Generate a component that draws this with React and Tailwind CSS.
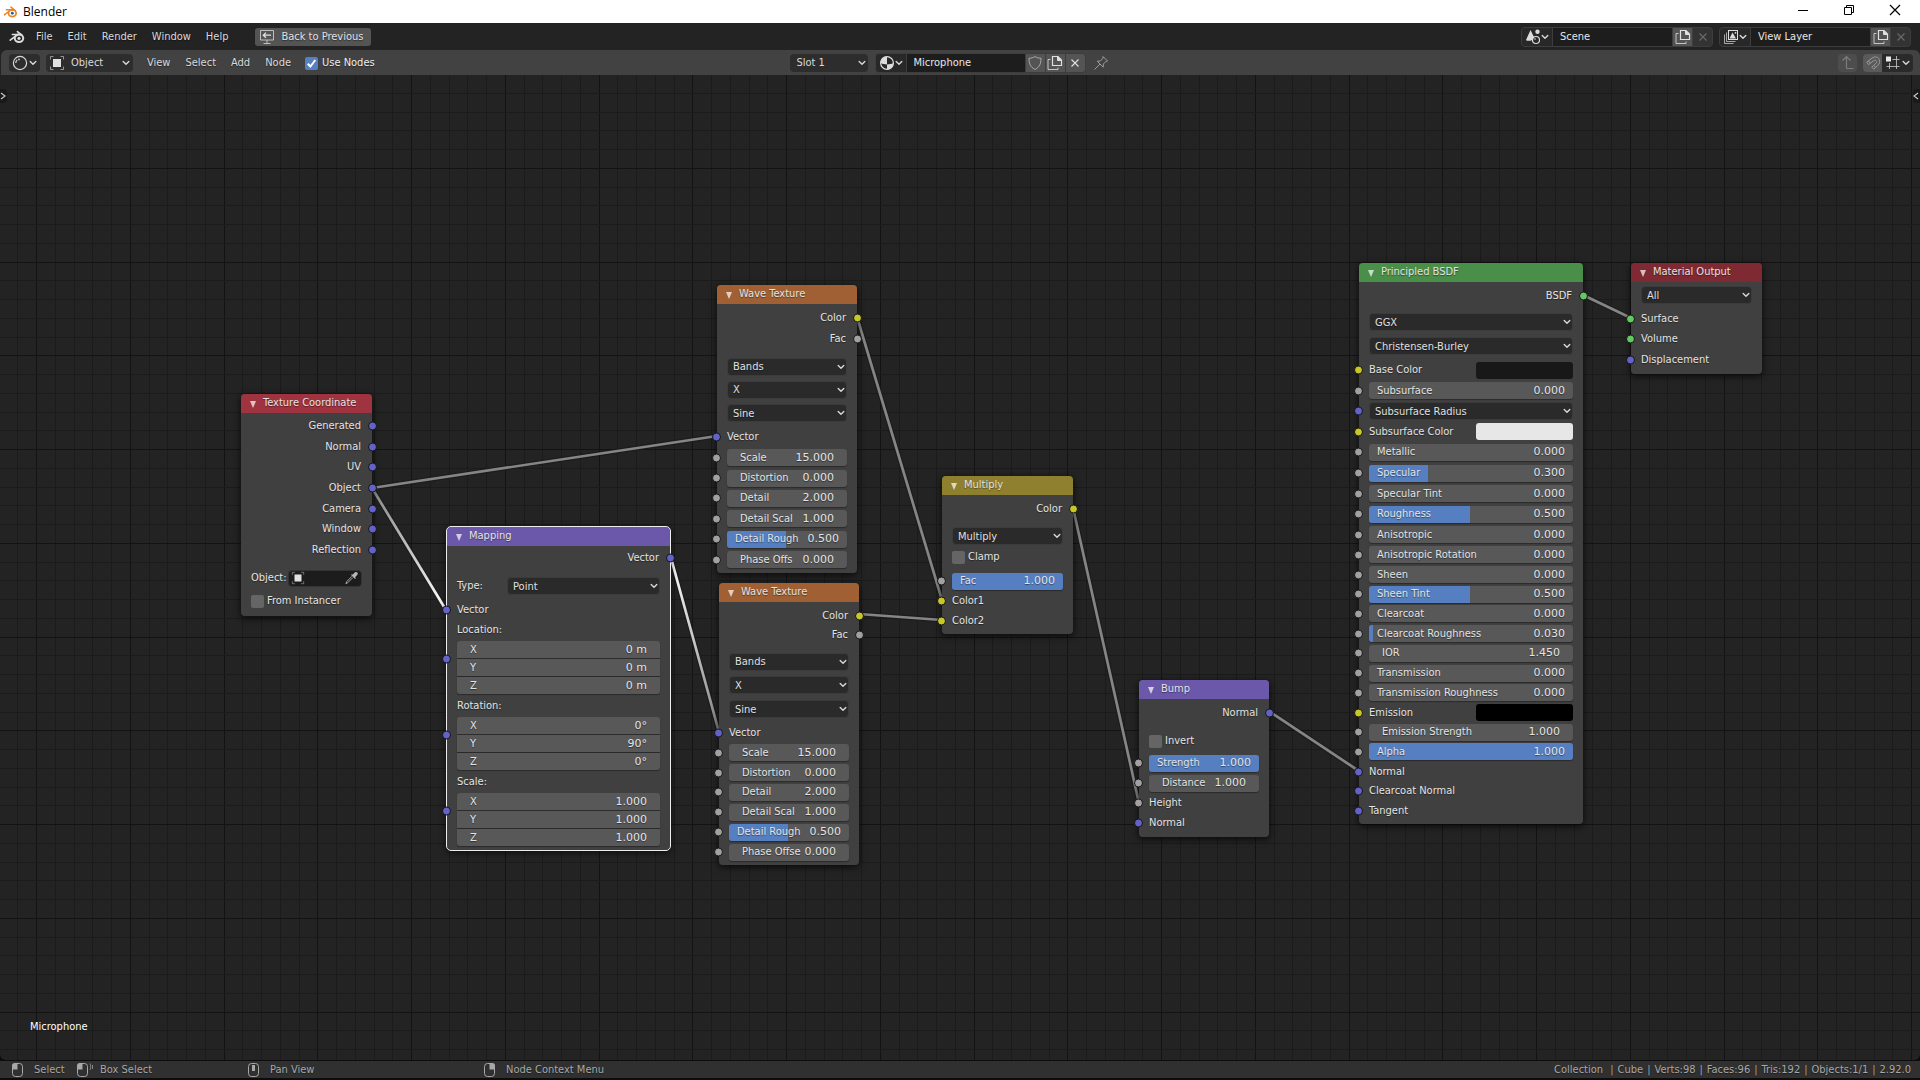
import React, { useId } from "react";

const SANS = "font-['DejaVu_Sans_Condensed','DejaVu_Sans',sans-serif]";
const SHADOW = "[text-shadow:0_1px_1px_rgba(0,0,0,0.45)]";

/* ---------- icons ---------- */

function BlenderLogo({ className, eye = "currentColor" }) {
  return (
    <svg viewBox="0 0 24 20" className={className} fill="none" aria-hidden="true">
      <g stroke="currentColor" strokeLinecap="round" strokeLinejoin="round" strokeWidth="2.4">
        <path d="M12.6 1.8 20 7.6" />
        <path d="M5 6.2h12" />
        <path d="M1.8 14.8 12 7" />
      </g>
      <ellipse cx="15" cy="12" rx="6.4" ry="5.6" stroke="currentColor" strokeWidth="3" />
      <circle cx="15" cy="12" r="2.4" fill={eye} />
    </svg>
  );
}

function Chevron({ className = "" }) {
  return (
    <svg viewBox="0 0 8 6" className={"pointer-events-none h-[6px] w-2 " + className} fill="none" stroke="#d8d8d8" strokeWidth="1.4" strokeLinecap="round" strokeLinejoin="round" aria-hidden="true">
      <path d="M1.2 1.4 4 4.2 6.8 1.4" />
    </svg>
  );
}

function Icon({ children, className = "size-4", label }) {
  return (
    <svg viewBox="0 0 16 16" className={"shrink-0 " + className} fill="none" stroke="currentColor" aria-label={label} aria-hidden={label ? undefined : true}>
      {children}
    </svg>
  );
}

const BackIcon = () => (
  <Icon>
    <path d="M1.5 1.5h13v9.5h-13zM8 11v3.5M4.5 14.5h7" strokeWidth="1" opacity="0.75" />
    <path d="M12 6.2H4.5M7 3.6 4.3 6.2 7 8.8" strokeWidth="1.3" />
  </Icon>
);
const ShaderIcon = () => (
  <Icon>
    <circle cx="8" cy="8" r="6.6" strokeWidth="1.2" />
    <path d="M3.8 8a4.2 4.2 0 0 1 1.4-3.1" strokeWidth="1.2" />
    <circle cx="7" cy="4.4" r="0.9" fill="currentColor" stroke="none" />
  </Icon>
);
const ObjectIcon = ({ className }) => (
  <Icon className={className}>
    <rect x="4" y="4" width="8" height="8" fill="#e0e0e0" stroke="none" />
    <path d="M1.5 4.5v-3h3M11.5 1.5h3v3M14.5 11.5v3h-3M4.5 14.5h-3v-3" opacity="0.6" />
  </Icon>
);
const MaterialIcon = () => (
  <Icon>
    <circle cx="8" cy="8" r="6.4" strokeWidth="1.2" />
    <path d="M8 1.6A6.4 6.4 0 0 0 1.6 8c2 1 4 1.4 6.4 1.4z" fill="currentColor" stroke="none" />
    <path d="M8 9.4c2.600 0 4.600-.4 6.400-1.400A6.400 6.400 0 0 1 8 14.400z" fill="currentColor" stroke="none" />
  </Icon>
);
const ShieldIcon = () => (
  <Icon>
    <path d="M8 1.500C6.300 2.700 4.300 3.200 2 3.300c0 5.200 1.200 8.600 6 11.200 4.800-2.600 6-6 6-11.200-2.300-.1-4.300-.6-6-1.800z" opacity="0.600" />
  </Icon>
);
const DuplicateIcon = () => (
  <Icon>
    <path d="M5.500 1.500h5.500l3.500 3.500v5.500h-9z" strokeWidth="1.200" />
    <path d="M10.500 1.500v4h4z" fill="currentColor" />
    <path d="M3.500 4.500h-2.500v10h10v-2" opacity="0.800" />
  </Icon>
);
const CrossIcon = () => (
  <Icon className="size-4">
    <path d="m4.500 4.500 7 7M11.500 4.500l-7 7" strokeWidth="1.100" />
  </Icon>
);
const PinIcon = () => (
  <Icon className="size-4">
    <path d="m10 1.500 4.500 4.500-1.500.3-2.600 2.700-.2 3.200-6-6 3.200-.2L10 3.200zM7 9 1.500 14.500" strokeLinejoin="round" />
  </Icon>
);
const SceneIcon = () => (
  <Icon>
    <path d="M5.500 1 9 8c0 1.500-1.500 2-2.500 3.500C4 12 1.500 12 1 11z" fill="currentColor" stroke="none" />
    <circle cx="12.500" cy="2.800" r="2.200" fill="currentColor" stroke="none" />
    <circle cx="11" cy="11" r="3.500" strokeWidth="1.200" />
    <circle cx="10" cy="10" r="0.800" fill="currentColor" stroke="none" />
  </Icon>
);
const LayerIcon = () => (
  <Icon>
    <rect x="5.500" y="1.500" width="9" height="9" />
    <path d="m6.500 9.500 3-6 3.500 6z" fill="currentColor" stroke="none" />
    <circle cx="12.500" cy="3.800" r="0.900" fill="currentColor" stroke="none" />
    <path d="M3.500 3.500v9h9M1.500 5.500v9h9" opacity="0.700" />
  </Icon>
);
const ParentIcon = () => (
  <Icon>
    <path d="M6.500 13.500v-12M2.500 5.500l4-4 4 4M6.500 13.500h7" strokeWidth="1.200" />
  </Icon>
);
const MagnetIcon = () => (
  <Icon>
    <path d="M1.700 7.200 7 3.200c3-2.300 6.200-1.200 7.200 1.200s.2 4.400-1.200 5.800l-4.200 4-2-2L11 8.200c1-1 .8-2-.1-2.600s-1.800-.3-2.600.3L3.600 9.600z" strokeLinejoin="round" />
    <path d="m3.500 6 1.800 2.300M8.600 10.400l2 2" />
  </Icon>
);
const SnapIcon = () => (
  <Icon>
    <rect x="1" y="1.500" width="5" height="5" fill="#ececec" stroke="none" />
    <path d="M7.500 4.500h7M11.500 1v13M4.500 8v6M1.500 11.500h13" opacity="0.800" />
  </Icon>
);
const PipetteIcon = () => (
  <Icon className="size-[14px]">
    <path d="M9 7.500 3 13.500l-2 1 1-2.500 6-6" />
    <path d="m7 4.500 4.500 4.500 1-1-1-1 2.700-2.700a2 2 0 0 0-2.800-2.800L8.700 4.200l-.8-.8z" fill="currentColor" stroke="none" />
  </Icon>
);

function MouseIcon({ button, drag }) {
  return (
    <svg viewBox="0 0 18 16" className="h-4 w-[18px] shrink-0" fill="none" stroke="#a8a8a8" aria-hidden="true">
      <rect x="1.500" y="1.500" width="10" height="13" rx="3" />
      {button === "left" && <path d="M1 7.500V4a3 3 0 0 1 3-3h2.500v6.500z" fill="#a8a8a8" stroke="none" />}
      {button === "right" && <path d="M12 7.500V4a3 3 0 0 0-3-3H6.500v6.500z" fill="#a8a8a8" stroke="none" />}
      {button === "middle" && <rect x="5" y="3" width="3" height="6" fill="#a8a8a8" stroke="none" />}
      {drag && <path d="M14 1.500c1 2 1 4.500 0 6.500M16.500 3v4" opacity="0.700" />}
    </svg>
  );
}

/* ---------- header controls ---------- */

function MenuItem({ children }) {
  return <button type="button" className={"px-[7px] text-[#dadada] " + SHADOW}>{children}</button>;
}

function IdField({ icon, name, width, children }) {
  return (
    <div className="flex h-5 items-stretch gap-px overflow-hidden rounded-[4px] border border-[#3d3d3d] bg-[#3d3d3d]">
      <button type="button" aria-label={"Browse " + name} className="flex w-[30px] items-center justify-between bg-[#282828] pr-[3px] pl-[3px] text-[#dcdcdc]">
        {icon}
        <Chevron />
      </button>
      <input aria-label={name + " name"} defaultValue={name} className={"min-w-0 bg-[#1d1d1d] px-[7px] text-[#e6e6e6] outline-none " + width} />
      {children}
    </div>
  );
}

function IconButton({ label, muted, children }) {
  return (
    <button type="button" aria-label={label} className={muted ? "flex w-[19px] items-center justify-center bg-[#333333] text-[#6a6a6a]" : "flex w-[19px] items-center justify-center bg-[#545454] text-[#e0e0e0]"}>
      {children}
    </button>
  );
}

/* ---------- node parts ---------- */

const SOCKET = { vector: "bg-[#6363c7]", color: "bg-[#c7c729]", value: "bg-[#a1a1a1]", shader: "bg-[#63c763]" };

function Socket({ type, side }) {
  const place = side === "out" ? "-right-[15px]" : "-left-[15px]";
  return <span className={"absolute top-1/2 size-[9px] -translate-y-1/2 rounded-full border border-[#151515] " + place + " " + SOCKET[type]} />;
}

function Row({ socket, side = "in", children, className = "" }) {
  return (
    <div className={"relative flex items-center " + className}>
      {socket && <Socket type={socket} side={side} />}
      {children}
    </div>
  );
}

function Out({ type, children }) {
  return (
    <Row socket={type} side="out" className="justify-end">
      <span className="pr-px">{children}</span>
    </Row>
  );
}

function Dropdown({ value, label, className = "w-full" }) {
  return (
    <span className={"relative flex h-[18px] items-center " + className}>
      <select aria-label={label} className={"h-full w-full appearance-none rounded-[4px] border border-[#3b3b3b] bg-[#2a2a2a] pl-[5px] leading-none text-[#e0e0e0] outline-none " + SHADOW}>
        <option>{value}</option>
      </select>
      <Chevron className="absolute right-[2px]" />
    </span>
  );
}

function Field({ label, value, fill = 0, slider, shape = "rounded-[3px]" }) {
  const id = useId();
  return (
    <div className={"relative flex h-[17px] w-full items-center overflow-hidden bg-[#585858] shadow-[0_1px_1px_rgba(0,0,0,0.35)] " + shape + (slider ? " px-2" : " px-[13px]")}>
      {fill > 0 && <span className="absolute inset-y-0 left-0 bg-[#557fc1]" style={{ width: fill * 100 + "%" }} />}
      <label htmlFor={id} className="relative shrink-0 whitespace-nowrap">{label}</label>
      <input id={id} defaultValue={value} className={"relative w-0 min-w-0 flex-1 bg-transparent text-right font-['DejaVu_Sans',sans-serif] text-[#e4e4e4] outline-none " + SHADOW} />
    </div>
  );
}

function Swatch({ label, value }) {
  const id = useId();
  return (
    <>
      <label htmlFor={id}>{label}</label>
      <input id={id} type="color" defaultValue={value} className="ml-auto h-[17px] w-[97px] appearance-none overflow-hidden rounded-[3px] border-0 bg-transparent p-0 [&::-webkit-color-swatch]:border-0 [&::-webkit-color-swatch-wrapper]:p-0" />
    </>
  );
}

function Check({ label }) {
  return (
    <label className="flex items-center gap-[3px]">
      <input type="checkbox" className="size-[13px] appearance-none rounded-[2px] bg-[#656565] checked:bg-[#5680c2]" />
      {label}
    </label>
  );
}

function Node({ title, tone, place, selected, children }) {
  return (
    <section
      className={
        "absolute flex flex-col rounded-[4px] bg-[#424242]/95 text-[#e4e4e4] shadow-[0_2px_6px_1px_rgba(0,0,0,0.6)] " +
        SHADOW + " " + place + (selected ? " outline outline-[#ededed]" : "")
      }
    >
      <header className={"flex h-[19px] shrink-0 items-center rounded-t-[4px] pb-px " + tone}>
        <button type="button" aria-label={"Collapse " + title} className="flex w-[22px] justify-center pt-[2px] pl-[2px]">
          <svg viewBox="0 0 6 7" className="h-[7px] w-[6px]" aria-hidden="true"><path d="M0 0h6L3 7z" fill="#ffffff" opacity="0.700" /></svg>
        </button>
        <h2>{title}</h2>
      </header>
      <div className="flex flex-col px-[10px]">{children}</div>
    </section>
  );
}

function VectorFields({ label, axes }) {
  return (
    <>
      <div className="flex h-5 items-center">{label}</div>
      <div className="flex h-14 flex-col gap-px pt-px">
        <Row socket="vector" className="flex-col gap-px">
          <Field label="X" value={axes[0]} shape="rounded-t-[3px]" />
          <Field label="Y" value={axes[1]} shape="rounded-none" />
        </Row>
        <Field label="Z" value={axes[2]} shape="rounded-b-[3px]" />
      </div>
    </>
  );
}

function WaveTexture({ place, outputs, options, inputs, last }) {
  return (
    <Node title="Wave Texture" tone="bg-[#a06034]" place={place}>
      <div className={"grid auto-rows-fr pt-1 " + outputs}>
        <Out type="color">Color</Out>
        <Out type="value">Fac</Out>
      </div>
      <div className={"grid auto-rows-fr items-center " + options}>
        <Dropdown label="Type" value="Bands" />
        <Dropdown label="Direction" value="X" />
        <Dropdown label="Profile" value="Sine" />
      </div>
      <div className={"grid auto-rows-fr " + inputs}>
        <Row socket="vector">Vector</Row>
        <Row socket="value"><Field label="Scale" value="15.000" /></Row>
        <Row socket="value"><Field label="Distortion" value="0.000" /></Row>
        <Row socket="value"><Field label="Detail" value="2.000" /></Row>
        <Row socket="value"><Field label="Detail Scal" value="1.000" /></Row>
        <Row socket="value"><Field label="Detail Rough" value="0.500" fill={0.49} slider /></Row>
        <Row socket="value"><Field label={last} value="0.000" /></Row>
      </div>
    </Node>
  );
}

const BSDF_FIRST = [
  ["Metallic", "0.000", 0],
  ["Specular", "0.300", 0.29],
  ["Specular Tint", "0.000", 0],
  ["Roughness", "0.500", 0.495],
  ["Anisotropic", "0.000", 0],
];
const BSDF_SECOND = [
  ["Anisotropic Rotation", "0.000", 0],
  ["Sheen", "0.000", 0],
  ["Sheen Tint", "0.500", 0.495],
  ["Clearcoat", "0.000", 0],
  ["Clearcoat Roughness", "0.030", 0.02],
];

const STATS = ["Collection\u00a0", "Cube", "Verts:98", "Faces:96", "Tris:192", "Objects:1/1", "2.92.0"];

/* ---------- canvas drawing ---------- */

const STEP = 75 / 4;
const GRID_COLUMNS = Array.from({ length: 210 }, (_, i) => ({ at: Math.floor(17.8 + i * STEP), major: i % 5 === 1 }));
const GRID_ROWS = Array.from({ length: 120 }, (_, i) => ({ at: Math.floor(18.3 + i * STEP), major: i % 5 === 4 }));

const LINKS = [
  { from: [372, 413], to: [717, 361], colors: ["#858585", "#858585"] },
  { from: [372, 413], to: [446, 535], colors: ["#858585", "#ffffff"] },
  { from: [671, 483], to: [719, 657], colors: ["#ffffff", "#858585"] },
  { from: [857, 242], to: [942, 525], colors: ["#858585", "#858585"] },
  { from: [859, 539], to: [942, 545], colors: ["#858585", "#858585"] },
  { from: [1073, 433], to: [1139, 728], colors: ["#858585", "#858585"] },
  { from: [1270, 637], to: [1359, 696], colors: ["#858585", "#858585"] },
  { from: [1583, 220], to: [1631, 243], colors: ["#858585", "#858585"] },
];

function Backdrop() {
  return (
    <svg className="absolute inset-0 size-full" aria-hidden="true">
      <g shapeRendering="crispEdges">
        {GRID_COLUMNS.map((c) => <rect key={c.at} x={c.at} y="0" width="1" height="100%" fill={c.major ? "#131313" : "#1b1b1b"} />)}
        {GRID_ROWS.map((r) => <rect key={r.at} x="0" y={r.at} width="100%" height="1" fill={r.major ? "#131313" : "#1b1b1b"} />)}
      </g>
      {LINKS.map((l, i) => (
        <g key={i}>
          <linearGradient id={"link" + i} gradientUnits="userSpaceOnUse" x1={l.from[0]} y1={l.from[1]} x2={l.to[0]} y2={l.to[1]}>
            <stop offset="0" stopColor={l.colors[0]} />
            <stop offset="1" stopColor={l.colors[1]} />
          </linearGradient>
          <line x1={l.from[0]} y1={l.from[1]} x2={l.to[0]} y2={l.to[1]} stroke="#1a1a1a" strokeWidth="5" opacity="0.700" />
          <line x1={l.from[0]} y1={l.from[1]} x2={l.to[0]} y2={l.to[1]} stroke={"url(#link" + i + ")"} strokeWidth="2.700" />
        </g>
      ))}
    </svg>
  );
}

/* ---------- page ---------- */

export default function App() {
  return (
    <div className={"flex h-screen flex-col overflow-hidden bg-[#0c0c0c] text-[11px] leading-4 " + SANS}>
      <div className="flex h-[23px] shrink-0 items-center bg-white pl-[3px] text-black">
        <BlenderLogo className="h-3 w-[15px] text-[#e8862a]" eye="#2a5f95" />
        <span className="ml-[5px] font-['Open_Sans',sans-serif] text-xs">Blender</span>
        <div className="ml-auto flex h-full items-center pr-[2px] pb-[3px]">
          <button type="button" aria-label="Minimize" className="flex w-[46px] justify-center"><Icon className="size-4"><path d="M3 8.500h10" /></Icon></button>
          <button type="button" aria-label="Restore" className="flex w-[45px] justify-center"><Icon className="size-4"><path d="M3.500 5.500h7v7h-7zM5.500 5.500v-2h7v7h-2" /></Icon></button>
          <button type="button" aria-label="Close" className="flex w-[47px] justify-center"><Icon className="size-4"><path d="m3 3 10 10M13 3 3 13" strokeWidth="1.200" /></Icon></button>
        </div>
      </div>

      <nav className="flex h-[27px] shrink-0 items-center gap-px bg-[#232323] pr-[9px] pl-[9px]">
        <button type="button" aria-label="Blender menu" className="mr-[3px]"><BlenderLogo className="h-[14px] w-4 text-[#dddddd]" /></button>
        <MenuItem>File</MenuItem>
        <MenuItem>Edit</MenuItem>
        <MenuItem>Render</MenuItem>
        <MenuItem>Window</MenuItem>
        <MenuItem>Help</MenuItem>
        <button type="button" className={"ml-[19px] flex h-[18px] items-center gap-[6px] rounded-[3px] bg-[#545454] px-1 pr-2 text-[#e2e2e2] " + SHADOW}>
          <BackIcon />
          Back to Previous
        </button>
        <div className="ml-auto flex gap-[6px]">
          <IdField icon={<SceneIcon />} name="Scene" width="w-[119px]">
            <IconButton label="New scene"><DuplicateIcon /></IconButton>
            <IconButton label="Delete scene" muted><CrossIcon /></IconButton>
          </IdField>
          <IdField icon={<LayerIcon />} name="View Layer" width="w-[119px]">
            <IconButton label="New view layer"><DuplicateIcon /></IconButton>
            <IconButton label="Remove view layer" muted><CrossIcon /></IconButton>
          </IdField>
        </div>
      </nav>

      <div className="shrink-0 bg-[#232323]">
        <div className="ml-px grid h-[25px] grid-cols-[1fr_auto_1fr] items-center rounded-t-[6px] bg-[#424242] pt-px pr-[7px] pl-2">
          <div className="flex items-center gap-px">
            <button type="button" aria-label="Editor type" className="mr-[5px] flex h-[18px] w-[31px] items-center justify-between rounded-[4px] bg-[#2d2d2d] px-[3px] text-[#d8d8d8]">
              <ShaderIcon />
              <Chevron />
            </button>
            <span className="relative mr-[6px] flex h-[18px] w-[87px] items-center">
              <select aria-label="Shader type" className="h-full w-full appearance-none rounded-[4px] bg-[#2d2d2d] pl-[25px] text-[#dadada]"><option>Object</option></select>
              <ObjectIcon className="pointer-events-none absolute left-[3px] size-4 text-[#d8d8d8]" />
              <Chevron className="absolute right-[3px]" />
            </span>
            <MenuItem>View</MenuItem>
            <MenuItem>Select</MenuItem>
            <MenuItem>Add</MenuItem>
            <MenuItem>Node</MenuItem>
            <label className={"ml-[6px] flex items-center gap-1 text-[#efefef] " + SHADOW}>
              <span className="relative flex">
                <input type="checkbox" defaultChecked className="size-[13px] appearance-none rounded-[2px] bg-[#5680c2]" />
                <svg viewBox="0 0 12 12" className="pointer-events-none absolute inset-0" fill="none" stroke="white" strokeWidth="1.800" aria-hidden="true"><path d="m2.500 6.200 2.500 2.600 4.500-6" /></svg>
              </span>
              Use Nodes
            </label>
          </div>
          <div className="flex items-center pr-6">
            <span className="relative mr-[7px] flex h-[18px] w-[78px] items-center">
              <select aria-label="Slot" className="h-full w-full appearance-none rounded-[4px] bg-[#2d2d2d] pl-[7px] text-[#dadada]"><option>Slot 1</option></select>
              <Chevron className="absolute right-[2px]" />
            </span>
            <IdField icon={<MaterialIcon />} name="Microphone" width="w-[118px]">
              <IconButton label="Fake user"><ShieldIcon /></IconButton>
              <IconButton label="New material"><DuplicateIcon /></IconButton>
              <IconButton label="Unlink material"><CrossIcon /></IconButton>
            </IdField>
            <button type="button" aria-label="Pin" className="ml-[7px] text-[#9c9c9c]"><PinIcon /></button>
          </div>
          <div className="flex items-center justify-end">
            <button type="button" aria-label="Parent node tree" className="mr-[6px] flex h-[18px] w-[19px] items-center justify-center rounded-[4px] bg-[#4d4d4d] text-[#7c7c7c]"><ParentIcon /></button>
            <button type="button" aria-label="Snap" className="flex h-[18px] w-[19px] items-center justify-center rounded-l-[4px] bg-[#5a5a5a] text-[#9a9a9a]"><MagnetIcon /></button>
            <button type="button" aria-label="Snap element" className="flex h-[18px] w-[31px] items-center justify-between rounded-r-[4px] bg-[#2a2a2a] px-[3px] text-[#cccccc]"><SnapIcon /><Chevron /></button>
          </div>
        </div>
      </div>

      <main className="relative min-h-0 flex-1 overflow-hidden rounded-b-[6px] bg-[#232323]">
        <Backdrop />

        <button type="button" aria-label="Show toolbar" className="absolute top-[14px] left-0 flex h-[14px] w-[7px] items-center rounded-r-[4px] bg-[#191919]">
          <svg viewBox="0 0 6 8" className="h-2 w-[6px]" fill="none" stroke="#c4c4c4" strokeWidth="1.200" aria-hidden="true"><path d="m1 1 4 3-4 3" /></svg>
        </button>
        <button type="button" aria-label="Show sidebar" className="absolute top-[14px] right-0 flex h-[14px] w-[7px] items-center rounded-l-[4px] bg-[#191919]">
          <svg viewBox="0 0 6 8" className="h-2 w-[6px]" fill="none" stroke="#c4c4c4" strokeWidth="1.200" aria-hidden="true"><path d="M5 1 1 4l4 3" /></svg>
        </button>

        <Node title="Texture Coordinate" tone="bg-[#9f333f]" place="left-[241px] top-[319px] w-[131px] h-[222px]">
          <div className="grid h-[147px] auto-rows-fr pt-[3px]">
            {["Generated", "Normal", "UV", "Object", "Camera", "Window", "Reflection"].map((n) => <Out key={n} type="vector">{n}</Out>)}
          </div>
          <label className="mt-[9px] flex h-[18px] items-center justify-between">
            Object:
            <span className="relative flex h-[17px] w-[74px] items-center justify-between rounded-[4px] border border-[#333333] bg-[#1c1c1c] px-[2px] text-[#b8b8b8]">
              <ObjectIcon className="pointer-events-none size-[14px]" />
              <input aria-label="Object" className="w-0 min-w-0 flex-1 bg-transparent outline-none" />
              <PipetteIcon />
            </span>
          </label>
          <div className="mt-[6px] flex h-4 items-center"><Check label="From Instancer" /></div>
        </Node>

        <Node title="Mapping" tone="bg-[#6c58ab]" place="left-[447px] top-[452px] w-[223px] h-[323px]" selected>
          <div className="grid h-[22px] pt-[2px]"><Out type="vector">Vector</Out></div>
          <div className="mt-2 flex h-5 items-center justify-between">
            Type:
            <Dropdown label="Mapping type" value="Point" className="w-[153px]" />
          </div>
          <Row socket="vector" className="mt-1 h-5">Vector</Row>
          <VectorFields label="Location:" axes={["0 m", "0 m", "0 m"]} />
          <VectorFields label="Rotation:" axes={["0°", "90°", "0°"]} />
          <VectorFields label="Scale:" axes={["1.000", "1.000", "1.000"]} />
        </Node>

        <WaveTexture place="left-[717px] top-[210px] w-[140px] h-[288px]" outputs="h-[45px]" options="mt-[6px] h-[70px]" inputs="mt-[2px] h-[143px]" last="Phase Offs" />
        <WaveTexture place="left-[719px] top-[508px] w-[140px] h-[282px]" outputs="h-[42px]" options="mt-[6px] h-[71px]" inputs="mt-[2px] h-[139px]" last="Phase Offse" />

        <Node title="Multiply" tone="bg-[#8f802f]" place="left-[942px] top-[401px] w-[131px] h-[158px]">
          <div className="grid h-6 pt-1"><Out type="color">Color</Out></div>
          <div className="mt-[7px] flex h-5 items-center"><Dropdown label="Blend type" value="Multiply" /></div>
          <div className="mt-px flex h-5 items-center"><Check label="Clamp" /></div>
          <Row socket="value" className="mt-1 h-5"><Field label="Fac" value="1.000" fill={1} slider /></Row>
          <Row socket="color" className="h-5">Color1</Row>
          <Row socket="color" className="h-5">Color2</Row>
        </Node>

        <Node title="Bump" tone="bg-[#6c58ab]" place="left-[1139px] top-[605px] w-[130px] h-[157px]">
          <div className="grid h-6 pt-1"><Out type="vector">Normal</Out></div>
          <div className="mt-2 flex h-5 items-center"><Check label="Invert" /></div>
          <div className="mt-[2px] grid auto-rows-[20px]">
            <Row socket="value"><Field label="Strength" value="1.000" fill={1} slider /></Row>
            <Row socket="value"><Field label="Distance" value="1.000" /></Row>
            <Row socket="value">Height</Row>
            <Row socket="vector">Normal</Row>
          </div>
        </Node>

        <Node title="Principled BSDF" tone="bg-[#498e49]" place="left-[1359px] top-[188px] w-[224px] h-[561px]">
          <div className="grid h-6 pt-1"><Out type="shader">BSDF</Out></div>
          <div className="mt-1 grid auto-rows-[24px] items-center">
            <Dropdown label="Distribution" value="GGX" />
            <Dropdown label="Subsurface method" value="Christensen-Burley" />
          </div>
          <div className="mt-[2px] grid h-[185px] auto-rows-fr">
            <Row socket="color"><Swatch label="Base Color" value="#181818" /></Row>
            <Row socket="value"><Field label="Subsurface" value="0.000" slider /></Row>
            <Row socket="vector"><Dropdown label="Subsurface Radius" value="Subsurface Radius" /></Row>
            <Row socket="color"><Swatch label="Subsurface Color" value="#e7e7e7" /></Row>
            {BSDF_FIRST.map(([n, v, f]) => <Row key={n} socket="value"><Field label={n} value={v} fill={f} slider /></Row>)}
          </div>
          <div className="grid h-[276px] auto-rows-fr">
            {BSDF_SECOND.map(([n, v, f]) => <Row key={n} socket="value"><Field label={n} value={v} fill={f} slider /></Row>)}
            <Row socket="value"><Field label="IOR" value="1.450" /></Row>
            <Row socket="value"><Field label="Transmission" value="0.000" slider /></Row>
            <Row socket="value"><Field label="Transmission Roughness" value="0.000" slider /></Row>
            <Row socket="color"><Swatch label="Emission" value="#000000" /></Row>
            <Row socket="value"><Field label="Emission Strength" value="1.000" /></Row>
            <Row socket="value"><Field label="Alpha" value="1.000" fill={1} slider /></Row>
            <Row socket="vector">Normal</Row>
            <Row socket="vector">Clearcoat Normal</Row>
            <Row socket="vector">Tangent</Row>
          </div>
        </Node>

        <Node title="Material Output" tone="bg-[#7f2a33]" place="left-[1631px] top-[188px] w-[131px] h-[111px]">
          <div className="mt-[3px] flex h-5 items-center"><Dropdown label="Target" value="All" /></div>
          <div className="mt-1 grid h-[61px] auto-rows-fr">
            <Row socket="shader">Surface</Row>
            <Row socket="shader">Volume</Row>
            <Row socket="vector">Displacement</Row>
          </div>
        </Node>

        <p className="absolute bottom-[25px] left-[30px] text-white">Microphone</p>
      </main>

      <footer className={"mt-px mb-[2px] flex h-[17px] shrink-0 items-center bg-[#303030] pt-px pr-[9px] pl-[11px] whitespace-nowrap text-[#a8a8a8] " + SHADOW}>
        <div className="flex w-[65px] shrink-0 items-center gap-[5px]"><MouseIcon button="left" />Select</div>
        <div className="flex w-[171px] shrink-0 items-center gap-[6px]"><MouseIcon button="left" drag />Box Select</div>
        <div className="flex w-[236px] shrink-0 items-center gap-[5px]"><MouseIcon button="middle" />Pan View</div>
        <div className="flex shrink-0 items-center gap-[5px]"><MouseIcon button="right" />Node Context Menu</div>
        <div className="ml-auto flex gap-1">
          {STATS.map((s, i) => (
            <React.Fragment key={s}>
              {i > 0 && <span>|</span>}
              <span>{s}</span>
            </React.Fragment>
          ))}
        </div>
      </footer>
    </div>
  );
}
